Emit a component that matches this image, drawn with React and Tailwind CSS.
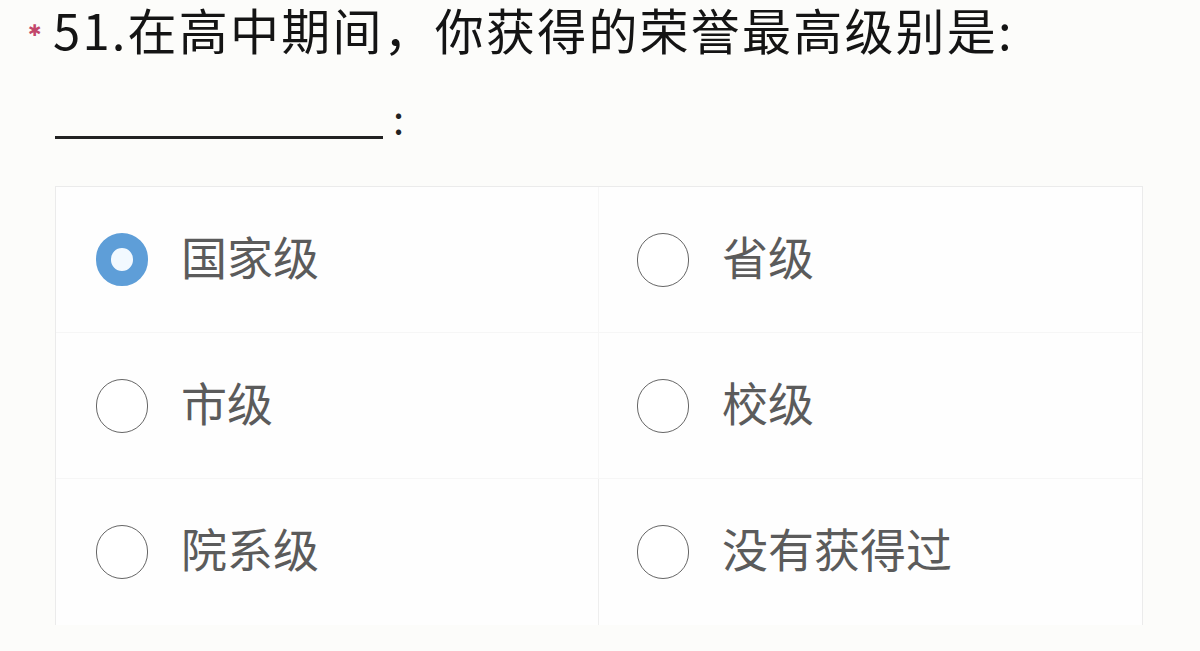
import React from 'react';

const options = [
  { label: '国家级', checked: true },
  { label: '省级' },
  { label: '市级' },
  { label: '校级' },
  { label: '院系级' },
  { label: '没有获得过' },
];

const Radio = ({ checked }) =>
  checked ? (
    <span className="w-[52px] h-[53px] rounded-full border-[15px] border-[#5e9ed8] bg-[#f2f9ff] shrink-0" />
  ) : (
    <span className="w-[52px] h-[54px] rounded-full border-[1.5px] border-[#666] bg-white shrink-0" />
  );

const App = () => {
  return (
    <div
      className="w-full h-[651px] bg-[#fcfcfa] overflow-hidden"
      style={{ fontFamily: '"Noto Sans CJK SC", "Noto Sans", sans-serif' }}
    >
      <div className="flex items-start pl-[28px] pt-[3px] h-[66px]">
        <span className="text-[#c2476b] text-[16px] leading-none mr-[12px] mt-[18px]">✱</span>
        <h1 className="text-[49px] leading-[52px] text-[#141414] tracking-[2.2px] whitespace-nowrap">
          51.在高中期间，你获得的荣誉最高级别是:
        </h1>
      </div>

      <div className="flex items-end pl-[55px] h-[73px]">
        <span className="w-[328px] border-b-[3px] border-[#222]" />
        <span className="text-[40px] leading-none text-[#222] ml-[10px] mb-[2px]">:</span>
      </div>

      <div className="ml-[55px] mt-[47px] w-[1088px] grid grid-cols-2 border-l border-t border-r border-[#ebebeb] bg-[#fefefe]">
        {options.map((o, i) => (
          <div
            key={o.label}
            className={`h-[146px] flex items-center ${i % 2 === 0 ? 'pl-[40px] border-r border-[#eeeeee]' : 'pl-[38px]'} ${i < 4 ? 'border-b border-[#f6f6f6]' : ''}`}
          >
            <Radio checked={o.checked} />
            <span className="ml-[33px] mb-[10px] text-[46px] leading-none text-[#5b5b5b]">{o.label}</span>
          </div>
        ))}
      </div>
    </div>
  );
};

export default App;
